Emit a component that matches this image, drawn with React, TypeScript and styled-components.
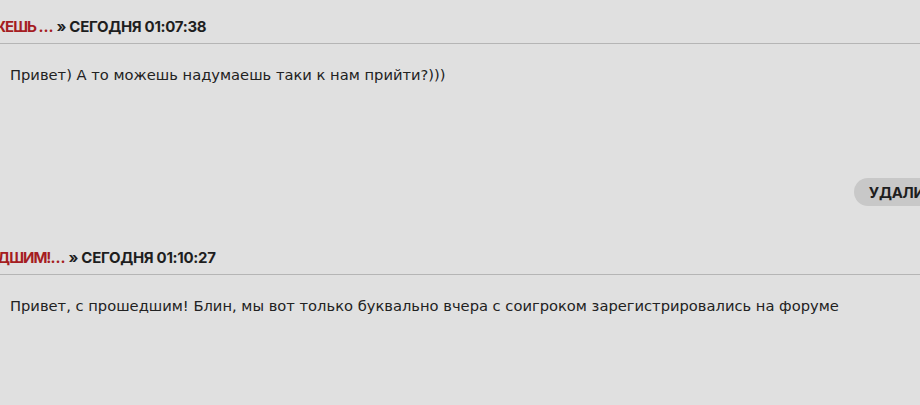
import React from "react";
import styled, { createGlobalStyle } from "styled-components";

const Global = createGlobalStyle`
  html, body {
    margin: 0;
    padding: 0;
    background: #e0e0e0;
    overflow: hidden;
  }
  body {
    font-family: "DejaVu Sans", Verdana, sans-serif;
  }
`;

const Page = styled.div`
  width: 959px;
  display: flex;
  flex-direction: column;
  gap: 42px;
  padding-top: 17px;
`;

const Post = styled.article`
  display: flex;
  flex-direction: column;
`;

const Header = styled.header<{ $shift: number }>`
  display: flex;
  align-items: baseline;
  gap: 4px;
  padding-bottom: 6px;
  border-bottom: 1px solid #b5b5b5;
  font-family: Inter, Roboto, "Liberation Sans", sans-serif;
  font-weight: 700;
  font-size: 15px;
  line-height: 20px;
  text-transform: uppercase;
  letter-spacing: -0.3px;
  color: #1e1e1e;
  white-space: nowrap;
  & > :first-child {
    margin-left: ${(p) => p.$shift}px;
  }
`;

const Author = styled.span`
  color: #a51d22;
  letter-spacing: -1px;
`;

const Stamp = styled.span`
  color: #1e1e1e;
`;

const Body = styled.div`
  padding: 21px 0 0 10px;
  font-size: 14.7px;
  line-height: 20px;
  color: #222222;
  min-height: 54px;
`;

const Actions = styled.div`
  display: flex;
  justify-content: flex-end;
  margin-top: 59px;
`;

const Button = styled.button`
  height: 28px;
  border: none;
  border-radius: 14px;
  background: #c8c8c8;
  padding: 0 15px;
  font-family: Inter, Roboto, "Liberation Sans", sans-serif;
  font-weight: 700;
  font-size: 15px;
  letter-spacing: -0.3px;
  text-transform: uppercase;
  color: #1e1e1e;
  cursor: pointer;
`;

export default function App() {
  return (
    <>
      <Global />
      <Page>
        <Post>
          <Header $shift={-10}>
            <Author>ЖЕШЬ …</Author>
            <Stamp>» Сегодня 01:07:38</Stamp>
          </Header>
          <Body>Привет) А то можешь надумаешь таки к нам прийти?)))</Body>
          <Actions>
            <Button>Удалить</Button>
          </Actions>
        </Post>
        <Post>
          <Header $shift={-11}>
            <Author>ЕДШИМ!…</Author>
            <Stamp>» Сегодня 01:10:27</Stamp>
          </Header>
          <Body>
            Привет, с прошедшим! Блин, мы вот только буквально вчера с соигроком
            зарегистрировались на форуме
          </Body>
        </Post>
      </Page>
    </>
  );
}
